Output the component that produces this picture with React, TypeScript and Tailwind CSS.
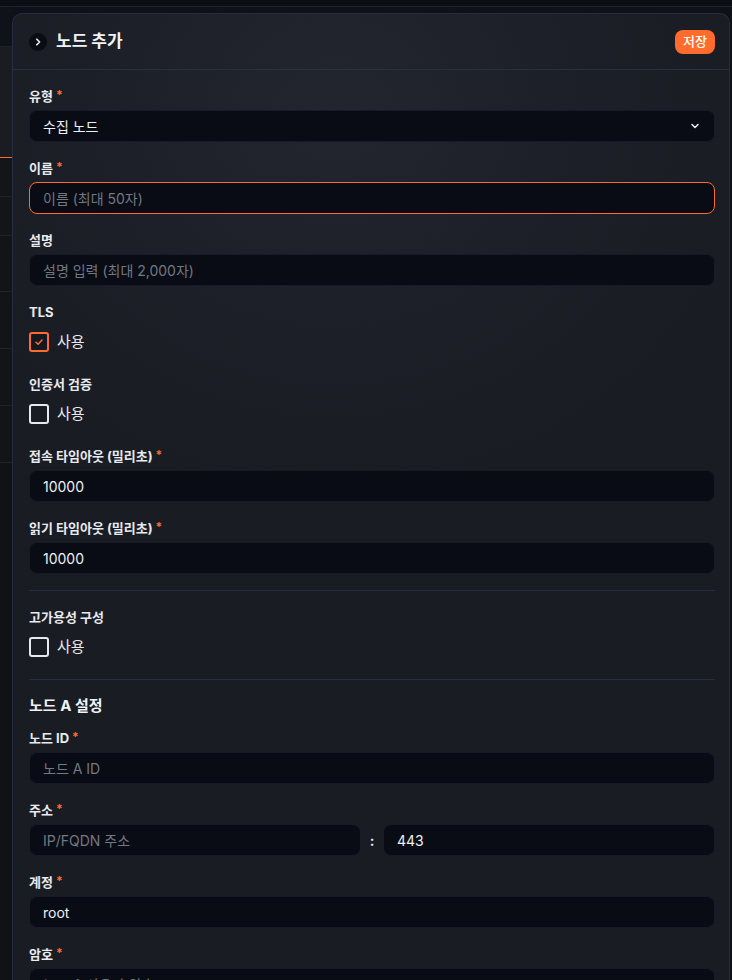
import React from "react";

const font = { fontFamily: 'Inter, "Noto Sans CJK KR", "Noto Sans", sans-serif' };

function Label({ text, req }: { text: string; req?: boolean }) {
  return (
    <div className="h-5 flex items-center text-[13px] font-bold text-[#e8eaef] leading-5">
      <span>{text}</span>
      {req && <span className="ml-[3px] text-[#ff6b2c] text-[12px] relative -top-[1px]">*</span>}
    </div>
  );
}

function Input({ value, placeholder, focus, className = "" }: { value?: string; placeholder?: string; focus?: boolean; className?: string }) {
  return (
    <div
      className={`h-8 rounded-lg bg-[#090c14] flex items-center px-[13px] text-[14px] border ${
        focus ? "border-[#ff6b2c]" : "border-[#161b2a]"
      } ${className}`}
    >
      {value ? (
        <span className="text-[#eef0f4]">{value}</span>
      ) : (
        <span className="text-[#737883]">{placeholder}</span>
      )}
    </div>
  );
}

function Field({ label, req, children }: { label: string; req?: boolean; children: React.ReactNode }) {
  return (
    <div className="flex flex-col gap-1">
      <Label text={label} req={req} />
      {children}
    </div>
  );
}

function Check({ checked }: { checked?: boolean }) {
  return (
    <div className="h-8 flex items-center gap-2">
      <div
        className={`w-5 h-5 rounded-[3px] border-2 flex items-center justify-center ${
          checked ? "border-[#ff6b2c] bg-[#141820]" : "border-[#e6e8ec] bg-transparent"
        }`}
      >
        {checked && (
          <svg width="10" height="10" viewBox="0 0 10 10" fill="none">
            <path d="M2 5.2 L4.1 7.2 L8 3" stroke="#ff6b2c" strokeWidth="1.5" strokeLinecap="round" strokeLinejoin="round" />
          </svg>
        )}
      </div>
      <span className="text-[15px] text-[#e8eaef]">사용</span>
    </div>
  );
}

export default function App() {
  return (
    <div className="relative w-[732px] h-[980px] overflow-hidden bg-[#0e1117]" style={font}>
      {/* background page */}
      <div className="h-[7px] bg-[#0b0e14] border-b border-[#1e2330]" />
      <div className="w-[13px] flex flex-col">
        <div className="h-[40px] bg-[#0f1218] border-b border-[#1e2330]" />
        <div className="h-[111px] bg-[#1a1c21] border-b border-[#ff6b2c]" />
        <div className="h-[39px] bg-[#131519] border-b border-[#1e2330]" />
        <div className="h-[39px] bg-[#131519] border-b border-[#1e2330]" />
        <div className="h-[56px] bg-[#121418] border-b border-[#1e2330]" />
        <div className="h-[57px] bg-[#121418] border-b border-[#1e2330]" />
        <div className="h-[57px] bg-[#121418] border-b border-[#1e2330]" />
        <div className="h-[57px] bg-[#121418] border-b border-[#1e2330]" />
        <div className="h-[520px] bg-[#101216]" />
      </div>

      {/* drawer */}
      <div
        className="absolute left-[12px] top-[13px] right-[2px] bottom-0 rounded-t-[10px] border border-[#262d42] border-b-0 overflow-hidden"
        style={{
          background:
            "radial-gradient(ellipse 60% 40% at 45% 10%, #23262f 0%, #1c1f27 60%, #191c23 100%)",
        }}
      >
        {/* header */}
        <div className="h-[56px] flex items-center justify-between pl-[16px] pr-[14px] border-b border-[#283046]">
          <div className="flex items-center gap-[9px]">
            <div className="w-[18px] h-[18px] rounded-full bg-[#0a0d15] flex items-center justify-center">
              <svg width="10" height="10" viewBox="0 0 10 10" fill="none">
                <path d="M3.8 2.2 L6.6 5 L3.8 7.8" stroke="#f1f2f5" strokeWidth="1.6" strokeLinecap="round" strokeLinejoin="round" />
              </svg>
            </div>
            <span className="text-[17px] font-bold text-[#f1f2f5]">노드 추가</span>
          </div>
          <div className="h-6 px-2 rounded-lg bg-[#ff6b2c] flex items-center text-[13px] font-medium text-white">저장</div>
        </div>

        {/* body */}
        <div className="px-[16px] pr-[14px] pt-[16px] flex flex-col">
          <div className="flex flex-col gap-4">
            <Field label="유형" req>
              <div className="h-8 rounded-lg bg-[#090c14] border border-[#161b2a] flex items-center justify-between px-[13px] text-[14px] text-[#eef0f4]">
                <span>수집 노드</span>
                <svg width="12" height="12" viewBox="0 0 12 12" fill="none">
                  <path d="M3 4.5 L6 7.5 L9 4.5" stroke="#e8eaef" strokeWidth="1.6" strokeLinecap="round" strokeLinejoin="round" />
                </svg>
              </div>
            </Field>
            <Field label="이름" req>
              <Input placeholder="이름 (최대 50자)" focus />
            </Field>
            <Field label="설명">
              <Input placeholder="설명 입력 (최대 2,000자)" />
            </Field>
            <div className="flex flex-col gap-1">
              <Label text="TLS" />
              <Check checked />
            </div>
            <div className="flex flex-col gap-1">
              <Label text="인증서 검증" />
              <Check />
            </div>
            <Field label="접속 타임아웃 (밀리초)" req>
              <Input value="10000" />
            </Field>
            <Field label="읽기 타임아웃 (밀리초)" req>
              <Input value="10000" />
            </Field>
          </div>

          <div className="my-4 border-t border-[#252c44]" />

          <div className="flex flex-col gap-1">
            <Label text="고가용성 구성" />
            <Check />
          </div>

          <div className="mt-4 mb-4 border-t border-[#252c44]" />

          <div className="text-[15px] font-bold text-[#f1f2f5] leading-5 mb-3">노드 A 설정</div>

          <div className="flex flex-col gap-4">
            <Field label="노드 ID" req>
              <Input placeholder="노드 A ID" />
            </Field>
            <Field label="주소" req>
              <div className="flex items-center gap-2">
                <Input placeholder="IP/FQDN 주소" className="flex-1" />
                <span className="text-[14px] font-bold text-[#e8eaef] w-[6px] text-center">:</span>
                <Input value="443" className="flex-1" />
              </div>
            </Field>
            <Field label="계정" req>
              <Input value="root" />
            </Field>
            <Field label="암호" req>
              <Input placeholder="노드 A 사용자 암호" />
            </Field>
          </div>
        </div>
      </div>
    </div>
  );
}
